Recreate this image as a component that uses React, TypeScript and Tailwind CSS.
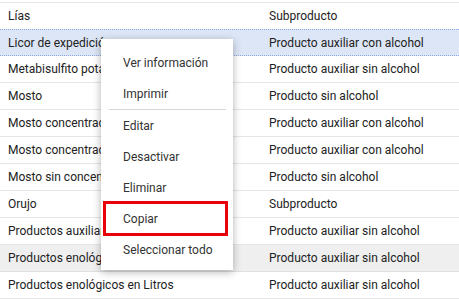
import React from "react";

const rows: [string, string][] = [
  ["Lías", "Subproducto"],
  ["Licor de expedición", "Producto auxiliar con alcohol"],
  ["Metabisulfito potásico", "Producto auxiliar sin alcohol"],
  ["Mosto", "Producto sin alcohol"],
  ["Mosto concentrado", "Producto auxiliar con alcohol"],
  ["Mosto concentrado rectificado", "Producto auxiliar con alcohol"],
  ["Mosto sin concentrar", "Producto sin alcohol"],
  ["Orujo", "Subproducto"],
  ["Productos auxiliares", "Producto auxiliar sin alcohol"],
  ["Productos enológicos", "Producto auxiliar sin alcohol"],
  ["Productos enológicos en Litros", "Producto auxiliar sin alcohol"],
];

const item = "h-[31px] flex items-center px-[22px] whitespace-nowrap";

export default function App() {
  return (
    <div
      className="relative w-[459px] h-[300px] overflow-hidden bg-white text-[12px] text-[#222]"
      style={{ fontFamily: "Roboto, 'Liberation Sans', sans-serif" }}
    >
      <div className="mt-[2px] border-t border-[#e6e6e6]">
        {rows.map(([a, b], i) => {
          const selected = i === 1;
          const gray = i === 9;
          return (
            <div
              key={i}
              className={
                "grid grid-cols-[261px_1fr] h-[27px] items-center " +
                (selected
                  ? "bg-[#dde6f6] border-y border-dotted border-[#8ea6dc] -mt-px"
                  : gray
                  ? "bg-[#efefef] border-b border-[#e0e0e0]"
                  : "border-b border-[#e6e6e6]")
              }
            >
              <div className="pl-2 whitespace-nowrap overflow-hidden">{a}</div>
              <div className="pl-2 whitespace-nowrap overflow-hidden">{b}</div>
            </div>
          );
        })}
      </div>

      <div className="absolute left-[101px] top-[39px] w-[132px] bg-white pt-2 pb-[5px] shadow-[0_2px_8px_rgba(0,0,0,0.3)] text-[#333]">
        <div className={item}>Ver información</div>
        <div className={item}>Imprimir</div>
        <div className="ml-2 mr-[7px] h-px bg-[#d6d6d6]" />
        <div className={item}>Editar</div>
        <div className={item}>Desactivar</div>
        <div className={item}>Eliminar</div>
        <div className={"relative " + item}>
          Copiar
          <span className="absolute left-[2px] right-[5px] top-[-2px] bottom-[-2px] border-[3px] border-[#e8000b]" />
        </div>
        <div className={item}>Seleccionar todo</div>
      </div>
    </div>
  );
}
